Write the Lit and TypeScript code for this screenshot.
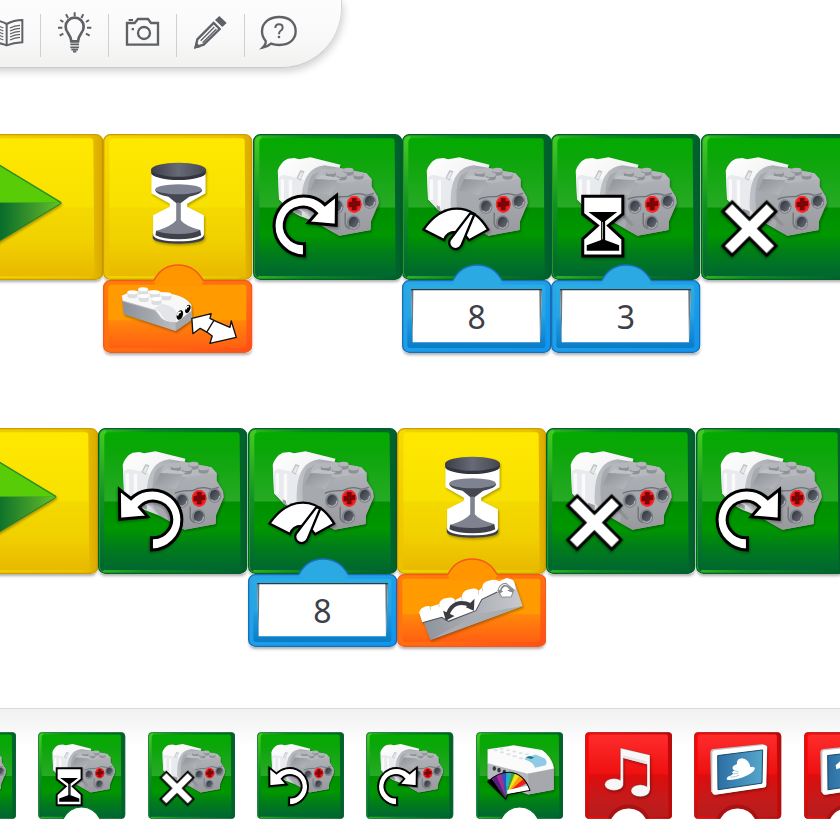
import { LitElement, html, svg, css, nothing } from "lit";
import { customElement, state } from "lit/decorators.js";

type Colour = "green" | "yellow" | "red";
type Art = "play" | "wait" | "cw" | "ccw" | "power" | "timer" | "stop" | "light" | "music" | "picture" | "number";

interface Block {
  label: string;
  colour: Colour;
  art: Art;
  value?: string;
  sensor?: "motion" | "tilt";
  notch?: boolean;
}

/* Shared gradients, referenced by every drawing below. */
const defs = svg`
  <linearGradient id="green-face" x2="0" y2="1">
    <stop offset="0" stop-color="#03aa00"/><stop offset=".15" stop-color="#0ca60a"/>
    <stop offset=".5" stop-color="#27aa25"/><stop offset=".505" stop-color="#009000"/>
    <stop offset=".7" stop-color="#009700"/><stop offset=".82" stop-color="#007f17"/>
    <stop offset="1" stop-color="#006732"/>
  </linearGradient>
  <linearGradient id="green-rim" x2="1" y2="0">
    <stop offset="0" stop-color="#31b71c"/><stop offset=".35" stop-color="#0b8c20"/><stop offset="1" stop-color="#00602c"/>
  </linearGradient>
  <linearGradient id="green-side" x2="0" y2="1">
    <stop offset="0" stop-color="#44cc24"/><stop offset=".5" stop-color="#119022"/><stop offset="1" stop-color="#006431"/>
  </linearGradient>
  <linearGradient id="yellow-face" x2="0" y2="1">
    <stop offset="0" stop-color="#ffe800"/><stop offset=".5" stop-color="#f8e000"/>
    <stop offset=".505" stop-color="#f4d900"/><stop offset=".75" stop-color="#f1d000"/><stop offset="1" stop-color="#e9b900"/>
  </linearGradient>
  <linearGradient id="yellow-rim" x2="1" y2="0">
    <stop offset="0" stop-color="#f0d400"/><stop offset=".9" stop-color="#e9c400"/><stop offset="1" stop-color="#dba800"/>
  </linearGradient>
  <linearGradient id="yellow-side" x2="0" y2="1">
    <stop offset="0" stop-color="#f6dc00"/><stop offset="1" stop-color="#ecc000"/>
  </linearGradient>
  <linearGradient id="red-face" x2="0" y2="1">
    <stop offset="0" stop-color="#ff2c2c"/><stop offset=".48" stop-color="#ee1010"/>
    <stop offset=".5" stop-color="#dc0d0d"/><stop offset=".8" stop-color="#c41b1b"/><stop offset="1" stop-color="#b81c1c"/>
  </linearGradient>
  <linearGradient id="red-rim" x2="1" y2="0">
    <stop offset="0" stop-color="#ff0606"/><stop offset=".6" stop-color="#e00808"/><stop offset="1" stop-color="#c00808"/>
  </linearGradient>
  <linearGradient id="red-side" x2="0" y2="1">
    <stop offset="0" stop-color="#ff0505"/><stop offset=".7" stop-color="#ee0505"/><stop offset="1" stop-color="#c01010"/>
  </linearGradient>
  <linearGradient id="tri-low" x2="1" y2="0">
    <stop offset="0" stop-color="#005f2a"/><stop offset=".3" stop-color="#086c2b"/><stop offset=".75" stop-color="#46a02a"/><stop offset="1" stop-color="#62c62a"/>
  </linearGradient>
  <linearGradient id="shell" x2="1" y2="1">
    <stop offset="0" stop-color="#ffffff"/><stop offset=".5" stop-color="#f3f3f5"/><stop offset="1" stop-color="#a4a7ab"/>
  </linearGradient>
  <linearGradient id="collar" x2="1" y2="0">
    <stop offset="0" stop-color="#bfc2c7"/><stop offset="1" stop-color="#a0a3a8"/>
  </linearGradient>
  <linearGradient id="plate" x2="0" y2="1">
    <stop offset="0" stop-color="#aeb1b6"/><stop offset="1" stop-color="#97999d"/>
  </linearGradient>
  <linearGradient id="panel" x2="1" y2="1">
    <stop offset="0" stop-color="#8d9095"/><stop offset="1" stop-color="#b9bbbf"/>
  </linearGradient>
  <linearGradient id="hole" x2="1" y2="1">
    <stop offset="0" stop-color="#2c3038"/><stop offset="1" stop-color="#70747c"/>
  </linearGradient>
  <linearGradient id="lid" x2="1" y2="0">
    <stop offset="0" stop-color="#3b3d47"/><stop offset=".5" stop-color="#676a77"/><stop offset="1" stop-color="#454751"/>
  </linearGradient>
  <linearGradient id="blue-rim" x2="1" y2="1">
    <stop offset="0" stop-color="#2aa8e6"/><stop offset="1" stop-color="#1094ee"/>
  </linearGradient>
  <linearGradient id="blue-face" x2="0" y2="1">
    <stop offset="0" stop-color="#2aace4"/><stop offset=".5" stop-color="#27a4e2"/>
    <stop offset=".6" stop-color="#1f96dc"/><stop offset="1" stop-color="#0b7cc6"/>
  </linearGradient>
  <linearGradient id="orange-rim" x2="1" y2="1">
    <stop offset="0" stop-color="#ff7d08"/><stop offset=".6" stop-color="#ff6c12"/><stop offset="1" stop-color="#ff4e18"/>
  </linearGradient>
  <linearGradient id="orange-face" x2="0" y2="1">
    <stop offset="0" stop-color="#ff9a00"/><stop offset=".55" stop-color="#ff9a00"/>
    <stop offset=".57" stop-color="#ff870a"/><stop offset="1" stop-color="#ff5f12"/>
  </linearGradient>
  <linearGradient id="brick-side" x2="1" y2="0">
    <stop offset="0" stop-color="#8c9098"/><stop offset="1" stop-color="#c8cacf"/>
  </linearGradient>
  <linearGradient id="screen" x2="1" y2="0">
    <stop offset="0" stop-color="#2c6ea4"/><stop offset="1" stop-color="#56a6cc"/>
  </linearGradient>
`;

const tileBase = (colour: Colour, h: number, notch: boolean, faceRight = 427) => {
  const edge = { green: "#045f2c", yellow: "#cf9c00", red: "#8f0a0a" }[colour];
  return svg`
    <rect x="2" y="2" width="443" height=${h - 4} rx="20" fill="url(#${colour}-rim)" stroke=${edge} stroke-width="4"/>
    <path d=${`M6 22Q8 7 24 6L26 18V${h - 20}L14 ${h - 8}Q6 ${h - 12} 6 ${h - 22}Z`} fill="url(#${colour}-side)"/>
    <path d=${`M19 24Q20 13 32 13H${faceRight - 12}Q${faceRight - 3} 13 ${faceRight - 3} 22L${faceRight} ${h - 12}H19Z`} fill="url(#${colour}-face)"/>
    ${notch
      ? svg`<path d=${`M128 ${h}A104 104 0 0 1 318 ${h}`} fill="#fff" stroke=${colour === "red" ? "#a81212" : "#027428"} stroke-width=${colour === "red" ? 26 : 6}/>
            <path d=${`M134 ${h + 2}V${h}A100 100 0 0 1 312 ${h}V${h + 2}Z`} fill="#fff"/>`
      : nothing}`;
};

const hole = (x: number, y: number) => svg`
  <ellipse cx=${x} cy=${y} rx="20" ry="22" fill="#7f8389"/>
  <ellipse cx=${x + 1} cy=${y} rx="15" ry="18" fill="url(#hole)"/>
  <path d=${`M${x - 10} ${y + 12}A15 18 0 0 0 ${x + 15} ${y}`} fill="none" stroke="#b7babf" stroke-width="3"/>`;

const stud = (x: number, y: number) => svg`
  <path d=${`M${x - 15} ${y}v10a15 7 0 0 0 30 0v-10z`} fill="#8e9196"/>
  <ellipse cx=${x} cy=${y} rx="15" ry="7" fill="#b3b6ba"/>`;

const motor = svg`
  <g class="cast">
    <path d="M74 110Q82 84 104 74L124 72 138 76 172 70 262 92 230 210 184 263 140 246 108 228 78 196Z" fill="url(#shell)"/>
    <path d="M76 132Q84 120 98 124L152 136 146 240 108 226 78 196Z" fill="#e9eaed"/>
    <path d="M88 136V198M112 138V222" stroke="#fff" stroke-width="10" opacity=".8"/>
    <path d="M130 132L142 108 154 112 142 140Z" fill="#c0c3c8"/><path d="M134 132L144 114 150 116 142 136Z" fill="#e8e9eb"/>
    <path d="M104 214l10 4v10l12 6v-10l20 8v14l-42-20z" fill="#9a9da2"/>
    <path d="M146 226Q142 150 166 120Q182 98 214 94L262 102 240 130 194 250 184 263Z" fill="url(#collar)"/>
    <path d="M166 236Q156 150 178 122L214 106 262 104 340 120 355 136 355 158 374 190 376 208 353 262 352 288 259 305 184 263Z" fill="#a6a9ae"/>
    <path d="M204 106L262 102 340 118 356 136 270 150 186 130Z" fill="#b6b8bc"/>
    ${stud(233, 113)}${stud(286, 108)}${stud(266, 122)}${stud(316, 120)}
    <path d="M170 170L186 136 252 138 248 160 232 184Z" fill="url(#panel)"/>
    <path d="M186 134L254 138 264 132 206 124Z" fill="#c0c2c6"/>
    <path d="M240 188Q248 152 272 146L355 134V158L374 190 376 208 353 262 352 288 259 305 222 284Z" fill="url(#plate)"/>
    <path d="M230 196Q250 186 284 188Q310 172 340 184L362 178" fill="none" stroke="#6d7076" stroke-width="4"/>
    <path d="M276 236V268Q278 280 290 284" fill="none" stroke="#6f7277" stroke-width="4"/>
    <path d="M218 236L248 272 240 276 214 250Z" fill="#8d9095"/>
    ${hole(251, 218)}${hole(349, 203)}${hole(301, 266)}
    <ellipse cx="303" cy="211" rx="22" ry="25" fill="#e8181a"/>
    <ellipse cx="303" cy="211" rx="20" ry="23" fill="none" stroke="#fa2c28" stroke-width="4"/>
    <path d="M296 192h14v10l11-2v15l-11 2v12h-14v-10l-10 1v-15l10-2z" fill="#7c0508"/>
  </g>`;

const turn = svg`<path d="M154 366A91 91 0 0 1 63 275A89 89 0 0 1 215 212L250 184 249 274 165 266 190 238A55 55 0 1 0 154 329Z" fill="#fff" stroke="#000" stroke-width="9"/>`;

const frame = svg`
  <path d="M422 158Q422 148 432 147L580 132 593 140 588 262 436 285 424 276Z" fill="#bfc1c6"/>
  <path d="M428 160Q428 152 436 151L582 135Q593 134 592 146L590 256Q590 262 584 263L436 285Q428 285 428 277Z" fill="#fff"/>
  <path d="M444 167L579 150 577 250 445 270Z" fill="url(#screen)" stroke="#1d4966" stroke-width="3"/>`;

const scenes: Record<Art, unknown> = {
  play: svg`
    <path class="cast" d="M60 46L323 208 60 369Z" fill="#1a7c2c"/>
    <path d="M60 48L320 206H60Z" fill="#58cc06"/>
    <path d="M60 206H321L60 366Z" fill="url(#tri-low)"/>
    <path d="M60 47L321 206" stroke="#2a8c2a" stroke-width="4"/>`,
  wait: svg`
    <g class="cast">
      <path d="M149 300V312A77 17 0 0 0 303 312V300Z" fill="#3c3e48"/>
      <path d="M145 112V178L200 209V218L150 244V304Q160 322 226 322T302 304V244L252 218V209L307 178V112Z" fill="#fff"/>
      <path d="M144 106V116A82 22 0 0 0 308 116V106Z" fill="#33353e"/>
      <ellipse cx="226" cy="107" rx="82" ry="21" fill="url(#lid)"/>
      <path d="M156 168Q158 182 196 188L220 208V268H232V208L258 188Q296 180 297 168Z" fill="#454751"/>
      <ellipse cx="226" cy="166" rx="70" ry="15" fill="#7f8291"/>
      <path d="M221 206H231V262H221Z" fill="#7f8291"/>
      <path d="M159 290L157 304Q180 316 226 316T294 304L291 288Z" fill="#3f414b"/>
      <path d="M160 291Q206 276 220 258H232Q246 276 291 288Q270 300 226 300T160 291Z" fill="#80838f"/>
    </g>`,
  cw: svg`${motor}<g class="cast">${turn}</g>`,
  ccw: svg`${motor}<g class="cast" transform="translate(314 0) scale(-1 1)">${turn}</g>`,
  power: svg`${motor}
    <g class="cast" fill="#fff" stroke="#000" stroke-width="7" stroke-linejoin="miter">
      <path d="M64 287Q108 224 164 224T258 287L201 319Q182 292 160 294Q134 294 126 318Z"/>
      <path d="M204 238L143 318A19 19 0 0 0 178 334L217 240Z" stroke-linejoin="round"/>
    </g>`,
  timer: svg`${motor}
    <g class="cast">
      <path d="M95 187H215V240L172 275 215 315V366H95V315L139 275 95 240Z" fill="#fff" stroke="#000" stroke-width="9"/>
      <path d="M112 234H198L162 262V318L204 334V350H107V334L150 318V262Z"/>
      <path d="M154 264V316" stroke="#fff" stroke-width="2"/>
    </g>`,
  stop: svg`${motor}
    <path class="cast" transform="translate(145 284) rotate(45)" d="M-20-20V-93H20V-20H93V20H20V93H-20V20H-93V-20Z" fill="#fff" stroke="#000" stroke-width="9"/>`,
  light: svg`
    <g class="cast" transform="scale(1.706) translate(-707 -96)">
      <path d="M742 148L862 206 864 284 742 236Z" fill="#a9acb1"/>
      <path d="M742 188L864 222 940 204V270L864 284 742 236Z" fill="#b5b8bd"/>
      <path d="M864 222L940 204V270L864 284Z" fill="#a6a8ad"/>
      <path d="M742 148L820 136 905 150Q935 170 941 206L862 222 742 190Z" fill="#fbfbfc"/>
      <path d="M858 172L886 164 914 176Q922 188 916 196L884 204Q882 188 852 178Z" fill="#8fcbe4"/>
      <path d="M856 172l12-4 14 5-10 4z" fill="#0a7a80"/>
      <g fill="#dfe1e4">${[0, 1, 2, 3, 4].map((i) => svg`<ellipse cx=${766 + i * 19} cy=${151 + i * 6} rx="7" ry="3"/><ellipse cx=${784 + i * 19} cy=${147 + i * 4} rx="6" ry="3"/>`)}</g>
      <g fill="#34373d"><ellipse cx="762" cy="206" rx="5" ry="7"/><ellipse cx="776" cy="211" rx="5" ry="7"/><ellipse cx="792" cy="216" rx="5" ry="6"/></g>
      <g>
        <path d="M796 298L742 246 754 236Z"/>
        <path d="M796 296L754 236 770 226Z" fill="#5b1d80"/>
        <path d="M797 294L768 227 786 220Z" fill="#a52b98"/>
        <path d="M797 290L784 221 800 218Z" fill="#2a55b8"/>
        <path d="M798 286L798 218 814 218Z" fill="#1fb2d0"/>
        <path d="M798 286L812 218 828 221Z" fill="#3aa43c"/>
        <path d="M798 286L824 220 842 228Z" fill="#f4e418"/>
        <path d="M798 284L838 226 854 240Z" fill="#f6a010"/>
        <path d="M798 282L850 237 860 250Z" fill="#ee2018"/>
        <path d="M801 284V271L862 258 868 271Z" fill="#fff"/>
        <path d="M796 298L742 246Q772 216 810 217 852 222 869 272L803 284Z" fill="none" stroke="#000" stroke-width="3"/>
      </g>
    </g>`,
  music: svg`
    <g class="cast" transform="scale(1.706) translate(-45 -96)">
      <g fill="#f7f7f8" stroke="#7b2020" stroke-width="1">
        <path d="M151 144L240 165V272H231V193L160 174V252H151Z"/>
        <ellipse cx="132" cy="254" rx="28" ry="18"/>
        <ellipse cx="211" cy="273" rx="28" ry="18"/>
      </g>
      <path d="M152 236H159V254H152ZM232 256H239V272H232Z" fill="#f7f7f8"/>
      <path d="M160 174L230 193V184L160 167Z" fill="#e4e4e6"/>
    </g>`,
  picture: svg`
    <g class="cast" transform="scale(1.706) translate(-373 -96)">
      ${frame}
      <path d="M502 192Q500 176 518 175Q538 178 542 202Q554 198 556 206Q552 220 520 232Q490 242 472 240Q468 232 482 228L492 222Q482 218 494 212Q484 206 492 198Z" fill="#fff"/>
      <path d="M494 212l12 4M492 222l14-2M482 232q18 0 26-6" stroke="#7fb0cc" stroke-width="2" fill="none"/>
    </g>`,
  number: svg`
    <g class="cast" transform="scale(1.706) translate(-373 -96)">
      ${frame}
      <path d="M468 196L484 182 498 180V242L484 244V204L470 208Z" fill="#fff"/>
    </g>`,
};

const motionSensor = svg`
  <g transform="translate(-310 -465)">
    <g class="cast">
      <path d="M368 524L372 568 527 618 578 582 574 550 480 530Z" fill="url(#brick-side)"/>
      <path d="M527 586L527 618 578 582 575 556Z" fill="#a3a6ab"/>
      <path d="M366 512L392 500 460 496 520 508Q560 516 575 540L574 558 530 592Q500 594 484 580L466 556 369 528Z" fill="#f8f8f9"/>
      <path d="M369 528L466 556 484 580Q500 594 530 592" fill="none" stroke="#b9bbc0" stroke-width="3"/>
      <path d="M486 536Q522 540 532 566L528 590Q504 592 490 578Q480 556 462 552Z" fill="#e4e5e8"/>
    </g>
    ${[[398, 502], [430, 493], [432, 513], [465, 502], [500, 508], [470, 522]].map(
      ([x, y]) => svg`<path d=${`M${x - 15} ${y}v12a15 6 0 0 0 30 0v-12z`} fill="#dcdde0"/><ellipse cx=${x} cy=${y} rx="15" ry="6" fill="#fff"/>`
    )}
    <ellipse cx="540" cy="570" rx="9" ry="15" transform="rotate(20 540 570)"/>
    <ellipse cx="564" cy="552" rx="7" ry="13" transform="rotate(20 564 552)"/>
    <path d="M533 572q2-12 10-10M558 553q2-10 9-8" stroke="#fff" stroke-width="5" fill="none"/>
    <path d="M576 580L634 566 630 580 650 590 690 607 694 588 709 637 630 655 637 633 622 622 601 610 579 626Z" fill="#fff" stroke="#111" stroke-width="4" stroke-linejoin="round"/>
    <path d="M642 586L620 622" stroke="#111" stroke-width="4"/>
  </g>`;

const tiltSensor = svg`
  <g transform="translate(-456 -462)">
    <g class="cast">
      <path d="M524 576L806 484 832 558 556 660Z" fill="url(#brick-side)"/>
      <path d="M556 660L700 582 832 558Z" fill="#aaadb2"/>
      <path d="M522 577L528 566Q544 554 556 560L582 552Q586 536 606 534Q624 530 630 540L650 530Q652 512 672 508Q694 502 700 512L710 504Q712 486 730 482Q752 476 762 484L784 474Q800 476 806 484L812 508 756 516 710 538 692 572 610 604 590 592 532 608Z" fill="#fff"/>
      <path d="M556 560V570M582 552V562M630 540V550M650 530V542M700 512V524M712 504V514" stroke="#cfd1d5" stroke-width="3"/>
      <path d="M532 608L590 592 610 604 692 572 710 538 756 516" fill="none" stroke="#4c4f56" stroke-width="3"/>
      <path d="M758 512Q764 490 782 490L806 510 798 530 770 532Z" fill="#fff" stroke="#8b8e94" stroke-width="3"/>
    </g>
    <path d="M608 582Q626 534 678 556" fill="none" stroke="#3a3c42" stroke-width="12"/>
    <path d="M594 572L628 588 602 602ZM662 562L688 536 686 572Z" fill="#3a3c42"/>
    <path d="M766 512Q776 484 796 508" fill="none" stroke="#85878d" stroke-width="5"/>
    <path d="M758 508l16 6-12 8zM786 512l16-8 2 14z" fill="#85878d"/>
  </g>`;

const plug = (colour: "blue" | "orange", art: unknown) => {
  const edge = colour === "blue" ? "#1670b8" : "#f6591a";
  const bumpFill = colour === "blue" ? "#2aa9e2" : "#ff9600";
  return svg`
    <svg class="plug" viewBox="0 -48 447 267" preserveAspectRatio="none" aria-hidden="true">
      <rect x="2" y="2" width="443" height="215" rx="20" fill="url(#${colour}-rim)" stroke=${edge} stroke-width="4"/>
      <path d="M152 2Q176 -45 225 -45T300 2V8H152Z" fill=${bumpFill}/>
      <path d="M152 2Q176 -45 225 -45T300 2" fill="none" stroke=${edge} stroke-width="4"/>
      <rect x="16" y="14" width="413" height="190" rx="8" fill="url(#${colour}-face)"/>
      <path d="M156 0H296V20H156Z" fill=${bumpFill}/>
      ${colour === "blue"
        ? svg`<path d="M27 27H419L413 187H32Z" fill="#fff"/><path d="M27 27H34L32 187ZM419 27H411L413 187Z" fill="#6a7680"/><path d="M27 29H419" stroke="#33383d" stroke-width="4"/>`
        : art}
    </svg>`;
};

const ink = "#5f6167";
const toolIcons = [
  {
    label: "Library",
    box: "-84 0 204 204",
    art: svg`
      <g fill="none" stroke=${ink} stroke-width="6">
        <path d="M20 72Q42 60 67 60V127Q40 128 20 136Q0 128-27 127V60Q-2 60 20 72V134"/>
        <path d="M30 84Q44 77 60 76M30 93Q44 86 60 85M30 102Q44 95 60 94M30 111Q44 104 60 103M30 120Q44 113 60 112M10 84Q-4 77-20 76M10 93Q-4 86-20 85M10 102Q-4 95-20 94M10 111Q-4 104-20 103M10 120Q-4 113-20 112" stroke-width="4"/>
      </g>`,
  },
  {
    label: "Ideas",
    box: "120 0 204 204",
    art: svg`
      <g fill="none" stroke=${ink} stroke-width="8">
        <path d="M214 124Q213 112 204 99Q197 90 197 80A27 27 0 0 1 251 80Q251 90 244 99Q235 112 234 124Z"/>
        <path d="M224 37V49M198 43L204 54M250 43L244 54M181 60L190 66M267 60L258 66M174 83H187M261 83H274M179 107L190 101M269 107L258 101" stroke-width="6"/>
        <path d="M211 133H237M211 142H237M214 149H234M219 155H229" stroke-width="5"/>
      </g>`,
  },
  {
    label: "Camera",
    box: "324 0 204 204",
    art: svg`
      <path d="M381 69H404L414 57H444L453 69H474V134H381Z" fill="none" stroke=${ink} stroke-width="7"/>
      <circle cx="432" cy="99" r="18" fill="none" stroke=${ink} stroke-width="7"/>
      <path d="M386 57H399V63H386ZM395 84H402V91H395Z" fill=${ink}/>`,
  },
  {
    label: "Draw",
    box: "528 0 204 204",
    art: svg`
      <path d="M587 141L592 118 641 69 659 87 611 134Z" fill="none" stroke=${ink} stroke-width="7"/>
      <path d="M582 146L588 126 603 141ZM645 60L658 48 680 69 667 81Z" fill=${ink}/>
      <path d="M602 122L643 81M608 128L649 87" stroke=${ink} stroke-width="4"/>`,
  },
  {
    label: "Help",
    box: "732 0 204 204",
    art: svg`
      <path d="M788 143Q799 132 797 123Q786 110 786 94C786 68 808 51 838 51S887 68 887 94 866 135 838 135Q824 135 813 131Q803 140 788 143Z" fill="none" stroke=${ink} stroke-width="7"/>
      <path d="M826 84Q826 73 837 73T848 83Q848 89 841 93Q837 96 837 103" fill="none" stroke=${ink} stroke-width="6"/>
      <circle cx="837" cy="111" r="4" fill=${ink}/>`,
  },
];

const programs: { name: string; blocks: Block[] }[] = [
  {
    name: "first",
    blocks: [
      { label: "Start", colour: "yellow", art: "play" },
      { label: "Wait for motion", colour: "yellow", art: "wait", sensor: "motion" },
      { label: "Motor clockwise", colour: "green", art: "cw" },
      { label: "Motor power", colour: "green", art: "power", value: "8" },
      { label: "Motor on for", colour: "green", art: "timer", value: "3" },
      { label: "Motor off", colour: "green", art: "stop" },
    ],
  },
  {
    name: "second",
    blocks: [
      { label: "Start", colour: "yellow", art: "play" },
      { label: "Motor counterclockwise", colour: "green", art: "ccw" },
      { label: "Motor power", colour: "green", art: "power", value: "8" },
      { label: "Wait for tilt", colour: "yellow", art: "wait", sensor: "tilt" },
      { label: "Motor off", colour: "green", art: "stop" },
      { label: "Motor clockwise", colour: "green", art: "cw" },
    ],
  },
];

const palette: Block[] = [
  { label: "Motor power", colour: "green", art: "power", notch: true },
  { label: "Motor on for", colour: "green", art: "timer", notch: true },
  { label: "Motor off", colour: "green", art: "stop" },
  { label: "Motor counterclockwise", colour: "green", art: "ccw" },
  { label: "Motor clockwise", colour: "green", art: "cw" },
  { label: "Light", colour: "green", art: "light", notch: true },
  { label: "Sound", colour: "red", art: "music", notch: true },
  { label: "Background", colour: "red", art: "picture", notch: true },
  { label: "Display", colour: "red", art: "number", notch: true },
];

@customElement("app-root")
export class AppRoot extends LitElement {
  @state() private programs = programs;

  static styles = css`
    :host {
      display: block;
      font-family: "Noto Sans", Roboto, sans-serif;
    }
    button {
      appearance: none;
      border: 0;
      padding: 0;
      margin: 0;
      background: none;
      cursor: pointer;
    }
    svg { display: block; }
    .defs { position: absolute; width: 0; height: 0; }
    .page {
      display: flex;
      flex-direction: column;
      min-height: 100vh;
      overflow: hidden;
      background: #fff;
    }
    .toolbar {
      align-self: flex-start;
      display: flex;
      align-items: center;
      height: 68px;
      box-sizing: border-box;
      margin-left: -28px;
      padding-right: 29px;
      border-bottom: 1px solid #c9cacf;
      border-right: 1px solid #d3d4d8;
      border-radius: 0 0 60px 0;
      background: linear-gradient(#fdfdfd, #f8f8f8 60%, #f1f1f0);
      box-shadow: 1px 3px 8px rgba(0, 0, 0, 0.2);
    }
    .tool { width: 68px; height: 68px; }
    .tool svg { width: 68px; height: 68px; }
    .tool + .tool {
      background: linear-gradient(#cfd0d4, #cfd0d4) 0 14px / 1px 43px no-repeat;
    }
    .workspace {
      display: flex;
      flex-direction: column;
      gap: 75px;
      padding: 66px 0 60px;
    }
    .program {
      display: grid;
      grid-template-columns: repeat(6, 1fr);
      align-items: start;
      margin: 0 -10px 0 -46px;
    }
    .program.second { margin: 0 -5px 0 -51px; }
    .tile {
      display: block;
      width: 100%;
      border-radius: 7px;
      box-shadow: 0 3px 3px -1px rgba(0, 0, 0, 0.32);
    }
    .tile svg { width: 100%; height: 146px; }
    .cast { filter: drop-shadow(3px 5px 3px rgba(0, 0, 0, 0.3)); }
    .socket {
      position: relative;
      display: block;
      width: 100%;
      height: 73px;
      box-sizing: border-box;
      padding: 10px;
      border-radius: 7px;
      box-shadow: 0 3px 3px -1px rgba(0, 0, 0, 0.32);
    }
    .plug {
      position: absolute;
      left: 0;
      bottom: 0;
      width: 100%;
      height: 89px;
    }
    .value {
      position: relative;
      display: block;
      width: 100%;
      height: 53px;
      box-sizing: border-box;
      padding: 0;
      border: 0;
      background: none;
      color: #3d4049;
      font: 32px "Noto Sans", Roboto, sans-serif;
      text-align: center;
      outline: none;
    }
    .tray {
      margin-top: auto;
      border-top: 1px solid #dcdcdc;
      background: linear-gradient(#f1f1f1, #f6f6f6 16px, #fff 36px);
    }
    .palette {
      display: grid;
      grid-template-columns: repeat(9, 1fr);
      gap: 22px;
      margin: 0 -51px 0 -71px;
      padding: 23px 0 21px;
    }
    .chip svg { width: 100%; height: 87px; }
  `;

  private renderBlock(b: Block) {
    return html`
      <div class="block">
        <button class="tile" aria-label=${b.label}>
          <svg viewBox="0 0 447 438" preserveAspectRatio="none" aria-hidden="true">
            ${tileBase(b.colour, 438, false, b.art === "play" ? 420 : 427)} ${scenes[b.art]}
          </svg>
        </button>
        ${b.value
          ? html`<label class="socket">${plug("blue", nothing)}
              <input class="value" inputmode="numeric" aria-label=${b.label} .value=${b.value} /></label>`
          : nothing}
        ${b.sensor
          ? html`<button class="socket" aria-label=${b.sensor + " sensor"}>
              ${plug("orange", b.sensor === "motion" ? motionSensor : tiltSensor)}
            </button>`
          : nothing}
      </div>`;
  }

  private renderChip(b: Block) {
    const scene = b.colour === "green" && b.art !== "light"
      ? svg`<g transform="translate(-5 -12) scale(1.06)">${scenes[b.art]}</g>`
      : scenes[b.art];
    return html`
      <button class="chip" aria-label=${b.label}>
        <svg viewBox="0 0 447 447" preserveAspectRatio="none" aria-hidden="true">
          ${tileBase(b.colour, 447, !!b.notch)} ${scene}
        </svg>
      </button>`;
  }

  render() {
    return html`
      <svg class="defs" aria-hidden="true"><defs>${defs}</defs></svg>
      <div class="page">
        <nav class="toolbar" aria-label="Tools">
          ${toolIcons.map(
            (t) => html`<button class="tool" aria-label=${t.label}>
              <svg viewBox=${t.box} aria-hidden="true">${t.art}</svg>
            </button>`
          )}
        </nav>
        <main class="workspace">
          ${this.programs.map(
            (p) => html`<section class="program ${p.name}">${p.blocks.map((b) => this.renderBlock(b))}</section>`
          )}
        </main>
        <footer class="tray">
          <div class="palette">${palette.map((b) => this.renderChip(b))}</div>
        </footer>
      </div>`;
  }
}
